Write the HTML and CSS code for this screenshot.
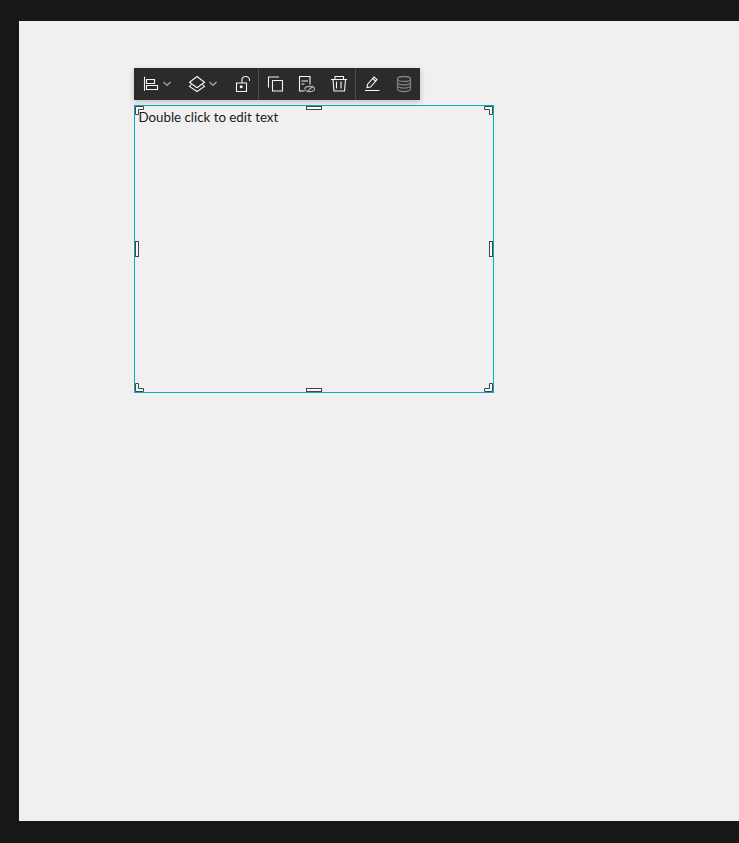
FILE: index.html
```html
<!DOCTYPE html>
<html lang="en">
<head>
<meta charset="utf-8">
<title>Text widget</title>
<link rel="stylesheet" href="styles.css">
</head>
<body>
<main class="canvas">
  <div class="toolbar">
    <div class="group">
      <button class="btn wide" type="button" aria-label="Align">
        <svg class="icon" viewBox="0 0 16 16"><path d="M1.500 0.800V14.800M3.500 3.500H11.500V7.500H3.500ZM3.500 9.500H14.500V13.500H3.500Z"/></svg>
        <svg class="chev" viewBox="0 0 8 8"><path d="M0.500 2L4 5.300L7.500 2"/></svg>
      </button>
      <button class="btn wide" type="button" aria-label="Layers">
        <svg class="icon" viewBox="0 0 16 16"><path d="M8 0.500L15.500 6.300L8 11.800L0.500 6.300ZM2.300 8.500L0.500 10.500L8 15.500L15.500 10.500L13.700 8.500"/></svg>
        <svg class="chev" viewBox="0 0 8 8"><path d="M0.500 2L4 5.300L7.500 2"/></svg>
      </button>
      <button class="btn" type="button" aria-label="Lock">
        <svg class="icon" viewBox="0 0 16 16"><path d="M2.500 7H12.500V15.500H2.500ZM8 7V3.500A3.700 3 0 0 1 15.500 3.500V5"/><circle class="dot" cx="7.200" cy="10.800" r="1.500"/></svg>
      </button>
    </div>
    <div class="group">
      <button class="btn" type="button" aria-label="Duplicate">
        <svg class="icon" viewBox="0 0 16 16"><path d="M5.500 4.500H15.500V15H5.500ZM1.500 11.500V1H12"/></svg>
      </button>
      <button class="btn" type="button" aria-label="Hide">
        <svg class="icon" viewBox="0 0 16 16"><path d="M5.500 15H0.500V0.500H11V8.500M2.500 5H9M2.500 8H5.500"/><g class="dim"><ellipse cx="10.700" cy="13" rx="4.800" ry="2.600"/><path d="M8 16L14 10"/></g></svg>
      </button>
      <button class="btn" type="button" aria-label="Delete">
        <svg class="icon" viewBox="0 0 16 16"><path d="M0 3.500H16M4 3.500V0.500H12.500V3.500M2 3.500L3 15H13.500L14.500 3.500M5.500 5.500V12.500M10 5.500V12.500"/></svg>
      </button>
    </div>
    <div class="group">
      <button class="btn" type="button" aria-label="Edit">
        <svg class="icon" viewBox="0 0 16 16"><path d="M1 14.500H15.500M3 11.500L3.500 8.500L10 1L13 3.500L6.500 11ZM8.500 2.500L11.500 5"/></svg>
      </button>
      <button class="btn muted" type="button" aria-label="Data">
        <svg class="icon" viewBox="0 0 16 16"><ellipse cx="8" cy="3" rx="6.500" ry="2.500"/><path d="M1.500 3V13C1.500 16.300 14.500 16.300 14.500 13V3M1.500 6.300C1.500 9.600 14.500 9.600 14.500 6.300M1.500 9.600C1.500 12.900 14.500 12.900 14.500 9.600"/></svg>
      </button>
    </div>
  </div>
  <div class="widget">
    <p class="placeholder">Double click to edit text</p>
    <svg class="corner tl" viewBox="0 0 9 9"><path d="M0.500 0.500H8.500V3.500H3.500V8.500H0.500Z"/></svg>
    <svg class="corner tr" viewBox="0 0 9 9"><path d="M0.500 0.500H8.500V3.500H3.500V8.500H0.500Z"/></svg>
    <svg class="corner bl" viewBox="0 0 9 9"><path d="M0.500 0.500H8.500V3.500H3.500V8.500H0.500Z"/></svg>
    <svg class="corner br" viewBox="0 0 9 9"><path d="M0.500 0.500H8.500V3.500H3.500V8.500H0.500Z"/></svg>
    <span class="handle top"></span>
    <span class="handle bottom"></span>
    <span class="handle left"></span>
    <span class="handle right"></span>
  </div>
</main>
</body>
</html>
```
FILE: styles.css
```css
html, body { margin: 0; height: 100%; }
body {
  background: #171717;
  padding: 21px 0 22px 19px;
  box-sizing: border-box;
  overflow: hidden;
}
.canvas {
  position: relative;
  height: 100%;
  background: #f0f0f0;
}
.toolbar {
  position: absolute;
  left: 115px;
  top: 47px;
  display: flex;
  height: 32px;
  background: #2b2b2b;
  box-shadow: 0 2px 6px rgba(0, 0, 0, 0.2);
}
.group { display: flex; align-items: center; }
.group + .group::before {
  content: "";
  width: 1px;
  height: 30px;
  background: #505050;
}
.btn {
  display: flex;
  align-items: center;
  justify-content: center;
  width: 32px;
  height: 32px;
  padding: 0;
  border: 0;
  background: none;
  color: #f5f5f5;
}
.btn.wide {
  justify-content: flex-start;
  gap: 4px;
  width: 46px;
  padding-left: 9px;
  box-sizing: border-box;
}
.btn.muted { color: #808080; }
.icon { width: 16px; height: 16px; overflow: visible; }
.icon path, .icon ellipse { fill: none; stroke: currentColor; stroke-width: 1.100; }
.btn.muted .icon path, .btn.muted .icon ellipse { stroke-width: 1.300; }
.icon .dot { fill: currentColor; }
.icon .dim path, .icon .dim ellipse { stroke: #b0b0b0; }
.chev { width: 8px; height: 8px; }
.chev path { fill: none; stroke: #a0a0a0; stroke-width: 1.400; }
.widget {
  position: absolute;
  left: 115px;
  top: 84px;
  width: 358px;
  height: 286px;
  border: 1px solid #00afc4;
}
.placeholder {
  margin: 0;
  padding: 3px 3.500px;
  font: 400 13.300px/17px Lato, sans-serif;
  color: #1a1a1a;
}
.handle {
  position: absolute;
  box-sizing: border-box;
  border: 1px solid #444;
  background: #f8f8f8;
}
.top, .bottom { width: 16px; height: 4px; left: 171px; }
.top { top: 0; }
.bottom { bottom: 0; }
.left, .right { width: 4px; height: 16px; top: 135px; }
.left { left: 0; }
.right { right: 0; }
.corner { position: absolute; width: 9px; height: 9px; }
.corner path { fill: #f8f8f8; stroke: #444; stroke-width: 1; }
.tl { left: 0; top: 0; }
.tr { right: 0; top: 0; transform: scaleX(-1); }
.bl { left: 0; bottom: 0; transform: scaleY(-1); }
.br { right: 0; bottom: 0; transform: scale(-1, -1); }
```
